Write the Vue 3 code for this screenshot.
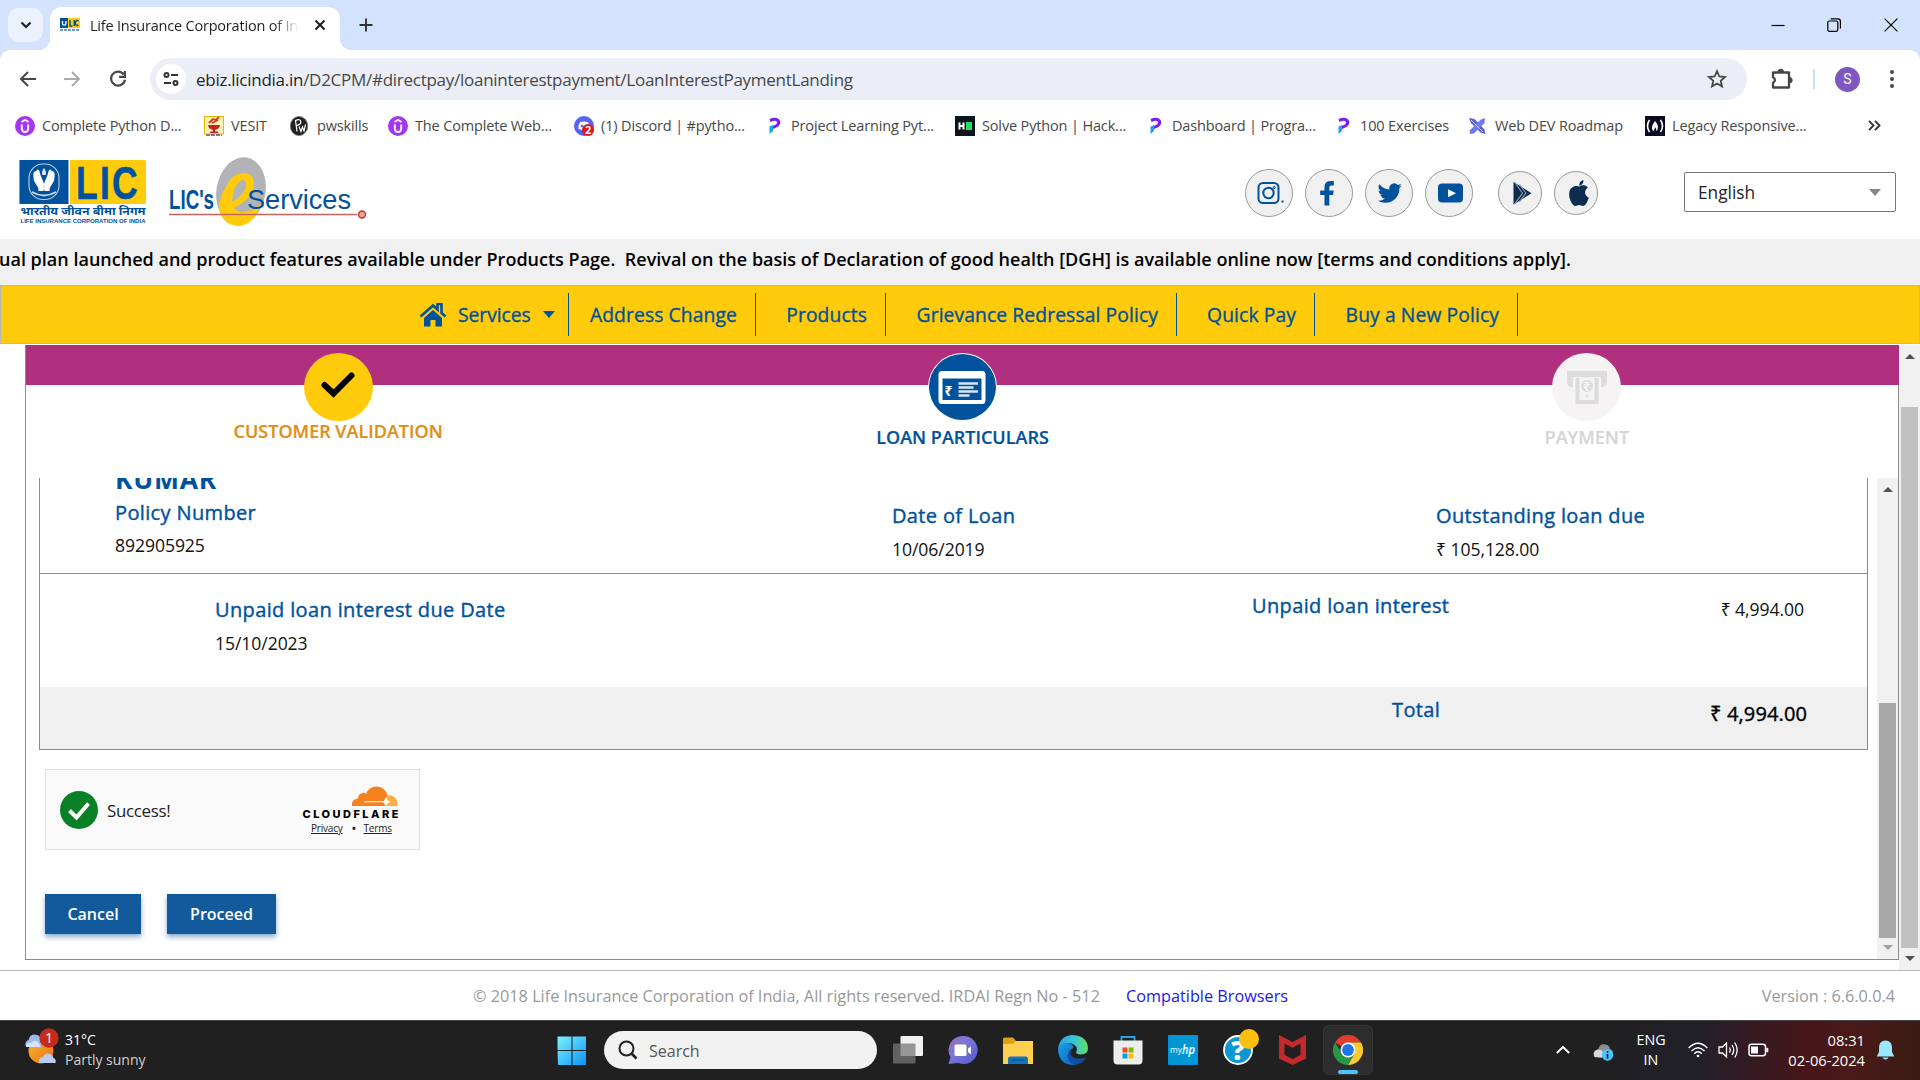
<script setup>
const bookmarks = [
  { icon: 'udemy', label: 'Complete Python D...', w: 189 },
  { icon: 'vesit', label: 'VESIT', w: 86 },
  { icon: 'pw', label: 'pwskills', w: 98 },
  { icon: 'udemy', label: 'The Complete Web...', w: 186 },
  { icon: 'discord', label: '(1) Discord | #pytho...', w: 190 },
  { icon: 'prog', label: 'Project Learning Pyt...', w: 191 },
  { icon: 'hack', label: 'Solve Python | Hack...', w: 190 },
  { icon: 'prog', label: 'Dashboard | Progra...', w: 188 },
  { icon: 'prog', label: '100 Exercises', w: 135 },
  { icon: 'web', label: 'Web DEV Roadmap', w: 177 },
  { icon: 'fcc', label: 'Legacy Responsive...', w: 180 },
]
const navItems = [
  { label: 'Address Change', w: 187 },
  { label: 'Products', w: 130 },
  { label: 'Grievance Redressal Policy', w: 291 },
  { label: 'Quick Pay', w: 138 },
  { label: 'Buy a New Policy', w: 203 },
]
</script>

<template>
  <div class="screen">
    <header class="tabs">
      <div class="tab-menu">
        <svg width="12" height="8" viewBox="0 0 12 8"><path d="M1.5 1.5 6 6l4.500-4.500" fill="none" stroke="#1f1f1f" stroke-width="2.200" /></svg>
      </div>
      <div class="tab">
        <svg class="fav" width="20" height="14" viewBox="0 0 20 14">
          <rect width="8" height="10" fill="#00529c" /><rect x="8" width="12" height="10" fill="#ffcb0b" />
          <path d="M2.500 3v2.500a1.700 1.700 0 0 0 3.400 0V3" fill="none" stroke="#fff" stroke-width="1.300" />
          <path d="M10 2v6h2.500M14.300 2v6M18.500 3a2 2.500 0 1 0 0 4" fill="none" stroke="#00529c" stroke-width="1.500" />
          <path d="M0 12h20" stroke="#6d9bc9" stroke-width="2" stroke-dasharray="3 1" />
        </svg>
        <span class="tab-title">Life Insurance Corporation of India</span>
        <svg class="tab-x" width="12" height="12" viewBox="0 0 12 12"><path d="m1.500 1.500 9 9m0-9-9 9" stroke="#1f1f1f" stroke-width="2" /></svg>
      </div>
      <svg class="plus" width="14" height="14" viewBox="0 0 14 14"><path d="M7 .5v13M.5 7h13" stroke="#333" stroke-width="1.900" /></svg>
      <div class="win">
        <svg width="14" height="14" viewBox="0 0 14 14"><path d="M.5 7.500h13" stroke="#000" stroke-width="1.200" /></svg>
        <svg class="restore" width="14" height="14" viewBox="0 0 14 14"><rect x=".8" y="3" width="10" height="10.300" rx="1.500" fill="none" stroke="#000" stroke-width="1.200" /><path d="M3.500.8h7.300q2.600 0 2.600 2.600v7" fill="none" stroke="#000" stroke-width="1.200" /></svg>
        <svg width="14" height="14" viewBox="0 0 14 14"><path d="m.6.600 12.800 12.800m0-12.800L.6 13.400" stroke="#000" stroke-width="1.200" /></svg>
      </div>
    </header>

    <div class="chrome">
      <div class="toolbar">
        <svg width="18" height="16" viewBox="0 0 18 16"><path d="M17 8H2m7-7L2 8l7 7" fill="none" stroke="#474747" stroke-width="2" /></svg>
        <svg class="fwd" width="18" height="16" viewBox="0 0 18 16"><path d="M1 8h15M9 1l7 7-7 7" fill="none" stroke="#aaa" stroke-width="2" /></svg>
        <svg class="reload" width="18" height="18" viewBox="0 0 18 18"><path d="M14.800 4.500A7 7 0 1 0 16 9.800M15.900 1v5.800h-5.800" fill="none" stroke="#474747" stroke-width="2.200" /></svg>
        <div class="omni">
          <div class="site">
            <svg width="16" height="16" viewBox="0 0 16 16" fill="none" stroke="#333" stroke-width="2"><circle cx="3.500" cy="4" r="2" /><path d="M8 4h7M1 12h7" /><circle cx="12.500" cy="12" r="2" /></svg>
          </div>
          <span class="url"><b>ebiz.licindia.in</b>/D2CPM/#directpay/loaninterestpayment/LoanInterestPaymentLanding</span>
          <svg class="star" width="20" height="20" viewBox="0 0 20 20"><path d="m10 2.200 2.300 5.300 5.700.5-4.300 3.800 1.300 5.700-5-3-5 3 1.300-5.700L2 8l5.700-.5z" fill="none" stroke="#474747" stroke-width="1.800" /></svg>
        </div>
        <svg class="puzzle" width="22" height="22" viewBox="0 0 22 22"><path d="M2 4.500h16v15H2v-4.600a3 3 0 0 0 0-5.600z" fill="none" stroke="#474747" stroke-width="2.300" stroke-linejoin="round" /><path d="M7 4a2.800 2.800 0 0 1 5.600 0M18.500 9.500a2.700 2.700 0 0 1 0 5.400" fill="#474747" stroke="#474747" /></svg>
        <i class="tsep"></i>
        <div class="avatar">S</div>
        <svg class="kebab" width="4" height="18" viewBox="0 0 4 18" fill="#474747"><circle cx="2" cy="2" r="2" /><circle cx="2" cy="9" r="2" /><circle cx="2" cy="16" r="2" /></svg>
      </div>

      <div class="bookmarks">
        <div v-for="b in bookmarks" :key="b.label" class="bm" :style="{ width: b.w + 'px' }">
          <svg width="20" height="20" viewBox="0 0 20 20">
            <g v-if="b.icon === 'udemy'"><circle cx="10" cy="10" r="10" fill="#a435f0" /><path d="M6.800 8.500v4.300a3.200 3.200 0 0 0 6.400 0V8.500M6.500 6 10 3.800 13.500 6" fill="none" stroke="#fff" stroke-width="1.900" /></g>
            <g v-else-if="b.icon === 'vesit'"><rect x=".5" y=".5" width="19" height="17.500" fill="#fff3b8" stroke="#f2b400" /><path d="M4 9h12q-.5 4-5 5v1.500h3V17H6v-1.500h3V14q-4.500-1-5-5z" fill="#c81f1f" /><path d="m5 7 4-4 3 1 3-3M8 7l6-3" stroke="#d63a1a" stroke-width="1.800" fill="none" /><path d="M2 19h16" stroke="#5a4aa0" stroke-width="1.500" stroke-dasharray="4 1" /></g>
            <g v-else-if="b.icon === 'pw'"><ellipse cx="9" cy="10" rx="8.700" ry="9.600" fill="#222" stroke="#777" stroke-width=".8" /><path d="m7 15.500-1.500-11q5-2 5.300 1t-4 4M9 10.500l2 5 1.500-4.500 1.500 4 1.500-6.500" fill="none" stroke="#fff" stroke-width="1.200" /></g>
            <g v-else-if="b.icon === 'discord'"><circle cx="10" cy="10" r="10" fill="#5865f2" /><path d="M4.500 13q-.5-5 2-7 3.500-1.200 7 0 2.500 2 2 7-5 2-11 0z" fill="#fff" /><circle cx="8" cy="10" r="1.300" fill="#5865f2" /><circle cx="14" cy="14" r="6" fill="#e0141c" /><text x="14" y="18" text-anchor="middle" font-size="11" font-weight="700" fill="#fff" font-family="Open Sans, sans-serif">2</text></g>
            <g v-else-if="b.icon === 'prog'"><path d="M6 4.500q6-2.500 8 0t-1 5l-5 2.500" fill="none" stroke="#7b1df2" stroke-width="3" /><path d="M5.500 10.500 9 9v6l-3.500 3z" fill="#17a5f5" /></g>
            <g v-else-if="b.icon === 'hack'"><rect width="20" height="20" fill="#0e141e" /><path d="M4.500 6.500v7M8.500 6.500v7M4.500 10h4" stroke="#fff" stroke-width="2" /><rect x="11" y="6" width="6" height="8" fill="#1ee35f" /></g>
            <g v-else-if="b.icon === 'web'"><path d="m1 2 5.500 1L16.500 13.500 17.500 18 12.500 16.500 3 7z" fill="#5a60dc" /><path d="m17 2-4 1.500L1.500 14.500 2 18l4-.5L16.500 7z" fill="#6f7bea" /><path d="m3 4 12 12" stroke="#fff" stroke-width=".7" /></g>
            <g v-else><rect width="20" height="20" fill="#0a0a23" /><path d="M4.500 4q-4 6 0 12M15.500 4q4 6 0 12" fill="none" stroke="#fff" stroke-width="1.600" /><path d="M10 5q3 3 3 6t-2 4q1-2-.8-3.700Q9.500 13 9 15q-2.500-1-2-4t3-6z" fill="#fff" /></g>
          </svg>
          <span>{{ b.label }}</span>
        </div>
        <svg class="more" width="13" height="11" viewBox="0 0 13 11"><path d="m1 .8 4.500 4.700L1 10.200M7 .8l4.500 4.700L7 10.200" fill="none" stroke="#333" stroke-width="1.900" /></svg>
      </div>
    </div>

    <div class="brand">
      <svg class="lic" width="128" height="70" viewBox="0 0 128 70">
        <rect x=".5" y="4" width="126.500" height="44" rx="1.500" fill="#ffcb0b" /><path d="M.5 4H50v44H.5z" fill="#00529c" /><path d="M50.200 4v44" stroke="#fff" stroke-width="1.400" />
        <rect x="10" y="8" width="30" height="35.500" rx="14" fill="none" stroke="#b5cce4" stroke-width="1.200" />
        <path d="M14.500 17q1-2.500 2.500-1.500l1-2 2 .5 1.500 5 2.500 6q2 4 .5 10h-5q.5-3-2-6-4-5-3-12zM35.500 17q-1-2.500-2.500-1.500l-1-2-2 .5-1.500 5-2.500 6q-2 4-.5 10h5q-.5-3 2-6 4-5 3-12z" fill="#fff" /><path d="M25 12q3 4 1.500 7h-3Q22 16 25 12z" fill="#dfeaf5" /><path d="M13 36q12 7 24 0" fill="none" stroke="#c3d6ea" stroke-width="2" />
        <text x="57" y="42.500" font-size="46" font-weight="700" fill="#00529c" stroke="#00529c" stroke-width=".6" textLength="64" lengthAdjust="spacingAndGlyphs" letter-spacing="3" font-family="Liberation Sans, sans-serif">LIC</text>
        <text x="1.500" y="59" font-size="11" font-weight="700" fill="#00529c" textLength="125" lengthAdjust="spacingAndGlyphs" font-family="Noto Sans Devanagari, Noto Sans, sans-serif">भारतीय जीवन बीमा निगम</text>
        <text x="1.500" y="67" font-size="6" font-weight="700" fill="#00529c" textLength="125" lengthAdjust="spacingAndGlyphs" font-family="Liberation Sans, sans-serif">LIFE INSURANCE CORPORATION OF INDIA</text>
      </svg>
      <svg class="eserv" width="200" height="72" viewBox="0 0 200 72">
        <ellipse cx="72" cy="35" rx="24.500" ry="34" transform="rotate(10 72 35)" fill="#b1b3b6" />
        <path d="M50 54Q50 40 58 29 63 18 73 17q12-1 12 12-1 13-20 23 5 6 13 3.500Q85 54 92 48q-3 10-9 16-7 6-14 6-15-1-19-16zM63 46q10-5 13.500-14 1.500-8-2.500-8-4 0-8 8-3 7-3 14z" fill="#ffcb0b" fill-rule="evenodd" />
        <text x="0" y="53" font-size="27" font-weight="700" fill="#00529c" textLength="45" lengthAdjust="spacingAndGlyphs" font-family="Liberation Sans, sans-serif">LIC's</text>
        <text x="78" y="53" font-size="27" fill="#00529c" textLength="104" lengthAdjust="spacingAndGlyphs" font-family="Liberation Sans, sans-serif">Services</text>
        <path d="M0 58.500h188" stroke="#c96560" stroke-width="1.500" /><circle cx="193" cy="58.500" r="3.500" fill="#f0a090" stroke="#b83a34" stroke-width="1.400" />
      </svg>
      <div class="social">
        <span class="c"><svg width="48" height="48" viewBox="0 0 48 48" fill="none" stroke="#00529c" stroke-width="2"><rect x="13.500" y="14" width="20" height="20" rx="4.500" /><circle cx="23.500" cy="24" r="5.200" /><circle cx="29.200" cy="18.500" r=".5" /><path d="M36.500 32.500h2" stroke-width="2" /></svg></span>
        <span class="c"><svg width="48" height="48" viewBox="0 0 48 48"><path d="M19.500 36.500V26h-4.300v-4.500h4.300V18q0-6 6-6h3.300v4.500h-2.500q-2 0-2 2v3h4.500L28 26h-3.700v10.500z" fill="#00529c" /></svg></span>
        <span class="c"><svg width="48" height="48" viewBox="0 0 24 24"><path d="M18.300 8.300c-.4.200-.9.300-1.400.4.500-.3.900-.8 1.100-1.300-.5.300-1 .5-1.600.6a2.450 2.450 0 0 0-4.200 2.200c-2-.1-3.900-1.100-5.100-2.600-.7 1.200-.3 2.600.8 3.300-.4 0-.8-.1-1.100-.3 0 1.200.8 2.200 2 2.400-.4.100-.7.100-1.100 0 .3 1 1.200 1.700 2.300 1.700A5 5 0 0 1 6.400 15.800c1.100.7 2.400 1.100 3.800 1.100 4.600 0 7.200-3.900 7-7.400.5-.3.800-.7 1.100-1.200z" fill="#00529c" /></svg></span>
        <span class="c"><svg width="48" height="48" viewBox="0 0 48 48"><rect x="13" y="14.500" width="25" height="19" rx="4" fill="#00529c" /><path d="m23 20.300 8 4-8 4z" fill="#fff" /></svg></span>
        <span class="c sm"><svg width="44" height="44" viewBox="0 0 44 44"><path d="M15.500 11v22.500l18-11.300z" fill="#0c2c50" /><path d="m16.500 11 8 11.200-8 11M21.500 13.500l6.500 8.700-6.500 8.500" fill="none" stroke="#8195ac" stroke-width="1.200" /></svg></span>
        <span class="c sm last"><svg width="44" height="44" viewBox="0 0 44 44"><path d="M25.500 15.500c1.800-1.600 6-2 8.400 1-4.200 3-3.500 8 .900 10.200-1.400 4-3.400 8.300-5.800 8.300-1.600 0-2.200-.9-3.800-.9-1.700 0-2.200.9-3.800.9-3 0-6.700-7-6.200-12.700.5-7 6.500-8.300 10.300-6.800z" fill="#0c2c50" /><path d="M25.200 14.800q-.2-4.500 4.300-5.800.2 4.600-4.300 5.800z" fill="#0c2c50" /></svg></span>
      </div>
      <div class="lang"><span>English</span><i></i></div>
    </div>

    <div class="ticker"><p>New individual plan launched and product features available under Products Page.&nbsp; Revival on the basis of Declaration of good health [DGH] is available online now [terms and conditions apply].</p></div>

    <nav class="nav">
      <div class="nav-item home">
        <svg width="28" height="24" viewBox="0 0 28 24" fill="#00529c"><path d="m14 7 9 8v8.500h-6.500V17h-5v6.500H5V15z" /><path d="m1.500 13.500 12.500-11 4.500 4V1h4v9l4 3.500" fill="none" stroke="#00529c" stroke-width="2.600" /></svg>
        <span>Services</span><i class="caret"></i>
      </div>
      <div v-for="n in navItems" :key="n.label" class="nav-item" :style="{ width: n.w + 'px' }"><span>{{ n.label }}</span></div>
    </nav>

    <main class="main">
      <section class="panel">
        <div class="steps">
          <div class="step done">
            <div class="dot"><svg width="36" height="30" viewBox="0 0 36 30"><path d="m4.500 15 9 8.500L31.500 5.500" fill="none" stroke="#000" stroke-width="6" stroke-linejoin="miter" stroke-linecap="round" /></svg></div>
            <span>CUSTOMER VALIDATION</span>
          </div>
          <div class="step now">
            <div class="dot"><svg width="48" height="34" viewBox="0 0 48 34"><rect x="2.500" y="3" width="43" height="29" rx="1.500" fill="none" stroke="#fff" stroke-width="4" /><path d="M2 6h44" stroke="#fff" stroke-width="5" /><path d="M20.500 13.500h19.500M20.500 17.500h15M20.500 21.500h19.500M20.500 25.500h11" stroke="#d8e6f3" stroke-width="2.400" /><text x="6.500" y="26" font-size="14" font-weight="700" fill="#fff" font-family="Noto Sans, sans-serif">₹</text></svg></div>
            <span>LOAN PARTICULARS</span>
          </div>
          <div class="step next">
            <div class="dot"><svg width="40" height="34" viewBox="0 0 40 34"><path d="M0 1h40v11q0 5-6 5V7H6v10q-6 0-6-5z" fill="#dcdcdc" /><path d="M10.500 8v24h19V8" fill="none" stroke="#dcdcdc" stroke-width="4" /><path d="M10 32h20" stroke="#dcdcdc" stroke-width="2" /><circle cx="20" cy="16" r="6" fill="#dcdcdc" /><text x="16.200" y="21" font-size="13" font-weight="700" fill="#f5f3f3" font-family="Noto Sans, sans-serif">₹</text><circle cx="20" cy="26" r="1.500" fill="#dcdcdc" /></svg></div>
            <span>PAYMENT</span>
          </div>
        </div>

        <div class="scroller">
          <div class="details">
            <div class="box">
              <div class="row1">
                <div class="c1"><h2>KUMAR</h2><label>Policy Number</label><p>892905925</p></div>
                <div class="c2"><label>Date of Loan</label><p>10/06/2019</p></div>
                <div class="c2"><label>Outstanding loan due</label><p>₹ 105,128.00</p></div>
              </div>
              <div class="row2">
                <div class="due"><label>Unpaid loan interest due Date</label><p>15/10/2023</p></div>
                <label class="interest">Unpaid loan interest</label>
                <p class="amount">₹ 4,994.00</p>
              </div>
              <div class="total"><label>Total</label><p>₹ 4,994.00</p></div>
            </div>

            <div class="captcha">
              <svg width="38" height="38" viewBox="0 0 38 38"><circle cx="19" cy="19" r="19" fill="#088126" /><path d="m9.500 19.500 7 7L28.500 12.500" fill="none" stroke="#fff" stroke-width="4" /></svg>
              <span class="ok">Success!</span>
              <div class="cf">
                <svg width="96" height="34" viewBox="0 0 96 34">
                  <path d="M50 21q-1-7 6-7.500 0-4 3-5 3-1.500 5 .5 3-7.500 10-7.500 9 0 11.500 9L83 21z" fill="#f6821f" /><path d="M82 21q0-6 5-11 8 1 8.500 8.500l-.5 2.500z" fill="#fbad41" /><path d="M62 16.300h20q-.5 0 2-4.300 1.500 4 4.500 4.700-3 1-4.500 3.800-1.500-3-4-3.200H62z" fill="#fff" />
                  <text x=".5" y="33.300" font-size="11" font-weight="800" fill="#000" textLength="96" font-family="Inter, sans-serif">CLOUDFLARE</text>
                </svg>
                <div class="links"><a>Privacy</a><b>•</b><a>Terms</a></div>
              </div>
            </div>

            <div class="actions"><button class="cancel">Cancel</button><button class="proceed">Proceed</button></div>
          </div>
          <div class="sb inner"><i class="up"></i><i class="thumb"></i><i class="down"></i></div>
        </div>
      </section>
      <div class="sb outer"><i class="up"></i><i class="thumb"></i><i class="down"></i></div>
    </main>

    <footer class="foot">
      <span class="copy">© 2018 Life Insurance Corporation of India, All rights reserved. IRDAI Regn No - 512</span>
      <a>Compatible Browsers</a>
      <span class="ver">Version : 6.6.0.0.4</span>
    </footer>

    <div class="taskbar">
      <div class="weather">
        <svg width="36" height="44" viewBox="0 0 36 44">
          <defs><linearGradient id="sun" x2="1" y2="1"><stop stop-color="#f8bb32" /><stop offset="1" stop-color="#e96d12" /></linearGradient></defs>
          <circle cx="16" cy="26" r="12.500" fill="url(#sun)" /><path d="M1 22q-2-5 2.500-7 2-7 8.500-5 4 1 4 5v7z" fill="#9db9ea" /><path d="M1 22q0-5 5-4 3-4 7-1l3 5z" fill="#d6e3fa" />
          <path d="M14 38q-1-6 4-6 2-5 7-3 3 1 3.500 4 3 1 2 5z" fill="#b9cdf4" /><circle cx="24" cy="13" r="9.700" fill="#c42b1c" /><text x="24" y="18" text-anchor="middle" font-size="14" fill="#fff" font-family="Open Sans, sans-serif">1</text>
        </svg>
        <p>31°C<br /><em>Partly sunny</em></p>
      </div>
      <svg class="start" width="30" height="30" viewBox="0 0 30 30">
        <defs><linearGradient id="win" x2="1" y2="1"><stop stop-color="#7cf2ff" /><stop offset="1" stop-color="#0a95fa" /></linearGradient></defs>
        <path d="M1 .5h13.500V14H.5V1zM15.500.5H29V14H15.500zM.5 15h14v14H1zM15.500 15H29v14H15.500z" fill="url(#win)" />
      </svg>
      <div class="search"><svg width="20" height="20" viewBox="0 0 20 20"><circle cx="8.500" cy="8.500" r="7" fill="none" stroke="#222" stroke-width="2" /><path d="m13.500 13.500 5 5" stroke="#222" stroke-width="2.600" /></svg><span>Search</span></div>
      <div class="apps">
        <svg width="30" height="30" viewBox="0 0 30 30"><rect x="7.500" y="1" width="22.500" height="20" rx="1" fill="#f1f1f1" /><rect x="0" y="8.500" width="22.500" height="20" rx="1" fill="#777" fill-opacity=".75" /></svg>
        <svg width="30" height="30" viewBox="0 0 30 30"><defs><linearGradient id="chat" x2="1" y2="1"><stop stop-color="#a06ab2" /><stop offset=".4" stop-color="#7b78d8" /><stop offset="1" stop-color="#5157cc" /></linearGradient></defs><path d="M15 1a14 14 0 1 1-4.500 27L.5 29l2-7A14 14 0 0 1 15 1z" fill="url(#chat)" /><rect x="6.500" y="9.500" width="12" height="11.500" rx="1.500" fill="#fff" /><path d="m20 13.500 3-2.500v8.500L20 17z" fill="#fff" /></svg>
        <svg width="30" height="30" viewBox="0 0 30 30"><path d="M0 4q0-1.500 1.500-1.500H10L13 6v6H0z" fill="#dfa013" /><path d="M0 9h10l3-3h17v23H0z" fill="#ffd050" /><path d="M5 29v-5q0-2.500 2.500-2.500h15q2.500 0 2.500 2.500v5z" fill="#1174bd" /><path d="M8.500 25h13" stroke="#0a4f8a" stroke-width="1.200" /></svg>
        <svg width="30" height="30" viewBox="0 0 30 30"><defs><linearGradient id="eg" x2="1"><stop stop-color="#20a0e0" /><stop offset=".5" stop-color="#37c3dc" /><stop offset="1" stop-color="#66e060" /></linearGradient><linearGradient id="eb" x2="1" y2="1"><stop stop-color="#1fa1e8" /><stop offset="1" stop-color="#0a62c0" /></linearGradient></defs><path d="M0 14Q2 0 15 0q14 1 15 13 0 6.500-7 6.500-6 0-4.500-3 2-5-4.500-8Q5 6 0 14z" fill="url(#eg)" /><path d="M0 14q2-6 8.500-6 6 0 7 5-6 2-4 9 1.500 5 6 7.800Q1 31 0 14z" fill="url(#eb)" /><path d="M12.500 14.500q-2 12 15.500 8-4 7-11.500 7.500-9-4-6.500-11 .5-3 2.500-4.500z" fill="#124e9c" /></svg>
        <svg width="30" height="30" viewBox="0 0 30 30"><path d="M8.500 7V2h13v5" fill="none" stroke="#2aa3e8" stroke-width="1.900" /><path d="M.5 5.500h29v20q0 4-4 4h-21q-4 0-4-4z" fill="#ededed" /><path d="M9.500 12.500h5v5h-5z" fill="#f04e23" /><path d="M15.500 12.500h5v5h-5z" fill="#7fba00" /><path d="M9.500 18.500h5v5h-5z" fill="#00a4ef" /><path d="M15.500 18.500h5v5h-5z" fill="#ffb900" /></svg>
        <svg width="30" height="30" viewBox="0 0 30 30"><rect width="30" height="30" rx="1" fill="#0096d6" /><text x="2" y="18" font-size="8.500" fill="#fff" textLength="12" lengthAdjust="spacingAndGlyphs" font-family="Open Sans, sans-serif">my</text><text x="14" y="19" font-size="13" font-weight="600" font-style="italic" fill="#fff" textLength="13" lengthAdjust="spacingAndGlyphs" font-family="Open Sans, sans-serif">hp</text></svg>
        <svg class="help" width="36" height="36" viewBox="0 0 36 36"><circle cx="15" cy="21" r="14" fill="#0e97d2" stroke="#fff" stroke-width="1.800" /><text x="15" y="31" text-anchor="middle" font-size="27" font-weight="800" fill="#fff" font-family="Open Sans, sans-serif">?</text><circle cx="26" cy="10" r="10" fill="#ffbf0f" /></svg>
        <svg class="mc" width="27" height="30" viewBox="0 0 27 30"><path d="M0 0 13.500 7 27 0v23.500L13.500 30 0 23.500zM5.500 8.500V20l8 4 8-4V8.500l-8 4.200z" fill="#c42a2c" fill-rule="evenodd" /></svg>
        <div class="active"><svg width="30" height="30" viewBox="0 0 30 30"><path d="M15 15 2 7.500A15 15 0 0 1 28 7.500H15z" fill="#e33b2e" /><path d="M28 7.500A15 15 0 0 1 15 30l6.500-11.500L15 7.500z" fill="#fcc934" /><path d="M2 7.500A15 15 0 0 0 15 30l6.500-11.500H9z" fill="#279847" /><circle cx="15" cy="15" r="7.500" fill="#fff" /><circle cx="15" cy="15" r="5.900" fill="#1f74e8" /></svg></div>
      </div>
      <div class="tray">
        <svg width="14" height="8" viewBox="0 0 14 8"><path d="m.8 7 6.200-6L13.200 7" fill="none" stroke="#fff" stroke-width="1.900" /></svg>
        <svg class="od" width="21" height="18" viewBox="0 0 21 18"><path d="M1.500 14Q-1 8 5 6.500 7 0 12.500 1.500q4 .5 4.500 4.500 3 1 3 4l-8 5z" fill="#8d8d8d" /><path d="M1.500 14Q-1 8 5 6.500q4 0 6 4l-2 4z" fill="#d9d9d9" /><circle cx="14.500" cy="12" r="5.700" fill="#4cc2ff" /><path d="M14.500 11v4.500M14.500 8v1.700" stroke="#123" stroke-width="1.700" /></svg>
        <p class="lg">ENG<br />IN</p>
        <svg class="wifi" width="20" height="16" viewBox="0 0 20 16" fill="none" stroke="#fff" stroke-width="1.400"><path d="M.7 6q9.300-9.500 18.600 0M3.500 9q6.500-6.500 13 0M6.200 11.700q3.800-3.800 7.600 0" /><circle cx="10" cy="14" r="1.300" fill="#fff" stroke="none" /></svg>
        <svg class="vol" width="21" height="18" viewBox="0 0 21 18" fill="none" stroke="#fff" stroke-width="1.300"><path d="M1 6h3.500l4-4v14l-4-4H1zM11.500 6.500q1.500 2.500 0 5M14 4q3.500 5 0 10M16.700 1.500q5 7.500 0 15" /></svg>
        <svg class="bat" width="21" height="14" viewBox="0 0 21 14"><rect x="1" y="1.200" width="16.500" height="11.600" rx="2.500" fill="none" stroke="#fff" stroke-width="1.500" /><rect x="3" y="3.500" width="7" height="7" fill="#fff" /><path d="M19.300 4.800v4.400" stroke="#fff" stroke-width="2" /></svg>
        <p class="clock">08:31<br />02-06-2024</p>
        <svg class="bell" width="17" height="20" viewBox="0 0 17 20"><path d="M8.500.5q6 0 6.500 6.500v5l2 4v.500H0V16l2-4V7Q2.500.5 8.500.5zM5.500 17.500h6q-1 2-3 2t-3-2z" fill="#98e8ff" /></svg>
      </div>
    </div>
  </div>
</template>

<style>
html, body { margin: 0; background: #fff; overflow: hidden; }
</style>

<style scoped>
* { box-sizing: border-box; }
.screen { width: 1920px; height: 1080px; overflow: hidden; background: #fff; font-family: "Open Sans", "Noto Sans", sans-serif; display: flex; flex-direction: column; }
.screen > * { flex: none; }
svg { display: block; flex: none; }
p, h2 { margin: 0; }
span, label, a, p { white-space: nowrap; }

.tabs { height: 50px; background: #d3e3fd; display: flex; align-items: center; padding-left: 8px; position: relative; }
.tab-menu { width: 35px; height: 34px; border-radius: 11px; background: #ebf2fe; display: flex; align-items: center; justify-content: center; }
.tab { margin-left: 7px; width: 290px; height: 43px; align-self: flex-end; background: #fff; border-radius: 12px 12px 0 0; display: flex; align-items: center; padding: 0 13px 7px 10px; position: relative; }
.tab::before, .tab::after { content: ""; position: absolute; bottom: 0; width: 12px; height: 12px; }
.tab::before { left: -12px; background: radial-gradient(circle at 0 0, transparent 12px, #fff 12.5px); }
.tab::after { right: -12px; background: radial-gradient(circle at 100% 0, transparent 12px, #fff 12.5px); }
.tab-title { margin-left: 10px; width: 209px; overflow: hidden; font-size: 14.5px; letter-spacing: -0.2px; color: #1f1f1f; -webkit-mask-image: linear-gradient(90deg, #000 88%, transparent); mask-image: linear-gradient(90deg, #000 88%, transparent); }
.tab-x { margin-left: 15px; }
.plus { margin-left: 19px; }
.win { margin-left: auto; margin-right: 22px; display: flex; gap: 42.5px; }
.restore { margin: 0 1px 0 -1px; }

.chrome { background: #fff; border-radius: 10px 10px 0 0; box-shadow: 0 -12px 0 0 #d3e3fd; height: 96px; }
.tabs { z-index: 1; }
.toolbar { height: 58px; display: flex; align-items: center; padding: 0 26px 0 19px; }
.fwd { margin-left: 26px; }
.reload { margin-left: 28px; }
.omni { margin-left: 23px; width: 1599px; height: 42px; border-radius: 21px; background: #ebeef7; display: flex; align-items: center; padding: 0 20px 0 6px; }
.site { width: 30px; height: 30px; border-radius: 50%; background: #fff; display: flex; align-items: center; justify-content: center; }
.url { margin-left: 10px; font-size: 17px; letter-spacing: -0.27px; color: #474747; }
.url b { font-weight: 400; color: #1f1f1f; }
.star { margin-left: auto; }
.puzzle { margin-left: 24px; }
.tsep { width: 2px; height: 20px; background: #c9dcfb; margin-left: 20px; }
.avatar { margin-left: 20px; width: 25px; height: 25px; border-radius: 50%; background: #7e57c2; color: #fff; font: 14px/25px Roboto, sans-serif; text-align: center; }
.kebab { margin-left: 30px; }
.bookmarks { display: flex; align-items: center; height: 35px; padding-left: 15px; }
.bm { display: flex; align-items: center; gap: 7px; font-size: 14.5px; letter-spacing: -0.15px; color: #474747; flex: none; }
.bm span { margin-top: -1px; }
.more { margin-left: 43px; }

.brand { height: 93px; display: flex; align-items: flex-start; padding-top: 10px; }
.lic { margin-left: 19px; overflow: visible; }
.eserv { margin-left: 22px; overflow: visible; }
.social { margin: 13px 0 0 876px; display: flex; align-items: center; }
.c { width: 48px; height: 48px; border-radius: 50%; border: 1px solid #999; background: #f0f0f0; margin-right: 12px; display: flex; align-items: center; justify-content: center; flex: none; }
.c.sm { width: 44px; height: 44px; margin: 0 12px 0 13px; }
.c.last { margin: 0; }
.lang { margin: 16px 0 0 86px; width: 212px; height: 40px; border: 1px solid #777; border-radius: 2px; display: flex; align-items: center; justify-content: space-between; padding: 0 14px 0 13px; font-size: 17.3px; color: #222; flex: none; }
.lang span { padding-top: 1px; }
.lang i { border: 6px solid transparent; border-top: 7px solid #858585; border-bottom: 0; }

.ticker { height: 46px; background: #f0f0f0; display: flex; justify-content: flex-end; padding-right: 349px; overflow: hidden; }
.ticker p { font-size: 18px; font-weight: 600; line-height: 40px; color: #000; letter-spacing: 0.01px; }

.nav { height: 59px; margin-bottom: 1px; background: #ffcb0b; border: 1px solid #b8b8b8; display: flex; align-items: center; padding-left: 418px; }
.nav-item { height: 43px; border-right: 1px solid #00529c; display: flex; align-items: center; justify-content: flex-end; padding-right: 18px; font-size: 19.3px; letter-spacing: 0.1px; -webkit-text-stroke: 0.35px #00529c; color: #00529c; flex: none; }
.nav-item.home { width: 150px; justify-content: flex-start; padding: 0; letter-spacing: -0.05px; }
.home span { margin-left: 11px; width: 74px; }
.caret { margin-left: 11px; border: 6px solid transparent; border-top: 7px solid #00529c; border-bottom: 0; }

.main { height: 625px; display: flex; padding-left: 25px; }
.panel { width: 1874px; height: 615px; border: 1px solid #8d8d8d; border-top: 0; display: flex; flex-direction: column; position: relative; }
.panel::before { content: ""; position: absolute; top: 0; left: 0; right: -1px; height: 40px; background: #b02f7f; }
.steps { height: 133px; display: grid; grid-template-columns: repeat(3, 1fr); position: relative; margin-right: -1px; }
.step { display: flex; flex-direction: column; align-items: center; padding-top: 8px; font-size: 18px; font-weight: 600; }
.dot { width: 69px; height: 68px; border-radius: 50%; display: flex; align-items: center; justify-content: center; }
.step span { line-height: 22px; margin-top: 5px; -webkit-text-stroke: 0.2px currentColor; }
.done { color: #e08e14; }
.done .dot { background: #ffcb0b; padding-bottom: 5px; }
.step.done span { margin-top: -1px; }
.now { color: #00529c; }
.now .dot { background: #00529c; border: 1px solid #fff; }
.next { color: #d6d6d6; }
.next .dot { background: #f5f3f3; }

.scroller { height: 481px; display: flex; overflow: hidden; }
.details { width: 1851px; padding-left: 13px; }
.box { width: 1829px; height: 272px; border: 1px solid #8d8d8d; border-top: 0; }
label { font-size: 20px; letter-spacing: 0.36px; -webkit-text-stroke: 0.4px #00529c; color: #00529c; line-height: 26px; display: block; }
.box p { font-size: 17.600px; line-height: 26px; color: #111; letter-spacing: -0.08px; }
.row1 { height: 96px; border-bottom: 1px solid #8d8d8d; display: grid; grid-template-columns: 852px 544px 1fr; }
.c1 { padding-left: 75px; }
.c1 h2 { font-size: 26.5px; letter-spacing: 0.7px; font-weight: 700; line-height: 28px; color: #00529c; margin-top: -13px; }
.c1 label { margin-top: 7px; }
.c2 p, .due p { margin-top: 7px; }
.c1 p { margin-top: 6px; }
.c2 { padding-top: 25px; }
.row2 { height: 113px; display: flex; align-items: flex-start; }
.due { padding: 23px 0 0 175px; width: 1212px; }
.interest { margin-top: 19px; }
.amount { margin: 22px 63px 0 auto; }
.total { height: 62px; background: #f0f0f0; display: flex; align-items: flex-start; }
.total label { width: 319px; margin: 10px 0 0 1352px; }
.box .total p { font-size: 20px; letter-spacing: 0.15px; -webkit-text-stroke: 0.4px #000; margin: 14px 0 0 -1px; color: #000; }

.captcha { margin: 19px 0 0 6px; width: 375px; height: 81px; border: 1px solid #e0e0e0; background: #fafafa; display: flex; align-items: center; padding-left: 14px; }
.ok { margin-left: 9px; padding-top: 1px; font-size: 16.900px; letter-spacing: -0.3px; color: #222; width: 141px; }
.cf { margin-left: 54px; width: 96px; padding-top: 0; }
.links { display: flex; font-size: 10px; line-height: 12px; margin: 3px 0 0 9px; color: #222; letter-spacing: -0.2px; gap: 8px; }
.links a { text-decoration: underline; }
.links a:first-child { width: 33px; }
.actions { margin: 44px 0 0 6px; display: flex; gap: 26px; }
.actions button { border: 0; height: 40px; padding: 0; background: #135a9d; color: #fff; font: 600 16px/40px "Open Sans", sans-serif; box-shadow: 0 3px 5px rgba(19, 90, 157, .5); }
.cancel { width: 96px; }
.proceed { width: 109px; }

.sb { background: #f1f1f1; display: flex; flex-direction: column; align-items: center; flex: none; }
.sb i { flex: none; }
.up { border: 5px solid transparent; border-bottom: 5px solid #505050; border-top: 0; }
.down { border: 5px solid transparent; border-top: 5px solid #505050; border-bottom: 0; }
.inner { width: 21px; }
.inner .up { margin-top: 9px; }
.inner .thumb { width: 17px; height: 235px; margin-top: 211px; background: #a8a8a8; }
.inner .down { margin-top: 7px; border-top-color: #a0a0a0; }
.outer { width: 21px; height: 625px; }
.outer .up { margin-top: 9px; }
.outer .thumb { width: 17px; height: 541px; margin-top: 48px; background: #c1c1c1; }
.outer .down { margin-top: 8px; }

.foot { height: 50px; border-top: 1px solid #bbb; display: flex; align-items: center; padding: 0 25px 0 473px; font-size: 16.250px; color: #999; }
.copy { width: 653px; }
.foot a { color: #1a1ae6; }
.ver { margin-left: auto; }

.taskbar { height: 60px; background: linear-gradient(90deg, #202020 0, #202020 1590px, #22202a 1700px, #481518 1810px, #4a1a18 1850px, #3a1c14 1920px); border-top: 1px solid #444; display: flex; align-items: center; color: #fff; padding-bottom: 1px; }
.taskbar p { font-size: 14px; line-height: 20px; }
.weather { display: flex; margin-left: 25px; width: 532px; align-items: center; }
.weather svg { margin-top: -6px; }
.weather p { margin-left: 4px; }
.weather em { font-style: normal; color: #d0d0d0; }
.start { margin-top: 1px; }
.search { margin-left: 17px; width: 273px; height: 38px; border-radius: 19px; background: #f2f2f2; display: flex; align-items: center; padding-left: 14px; font-size: 16px; color: #555; }
.search span { margin-left: 11px; padding-top: 1px; }
.apps { display: flex; align-items: center; margin-left: 16px; gap: 25px; }
.help { margin: -6px -6px 0 0; }
.mc { margin-left: 1px; }
.active { margin-left: -8px; width: 50px; height: 50px; border-radius: 6px; background: #2d2d2d; border: 1px solid #363636; display: flex; align-items: center; justify-content: center; position: relative; }
.active::after { content: ""; position: absolute; bottom: 0; left: 14px; width: 20px; height: 4px; border-radius: 2px; background: #4cc2ff; }
.tray { margin-left: auto; margin-right: 26px; display: flex; align-items: center; }
.od { margin-left: 23px; margin-top: 3px; }
.taskbar .lg { margin-left: 22px; width: 30px; text-align: center; font-size: 14.300px; }
.wifi { margin-left: 22px; }
.vol { margin-left: 10px; }
.bat { margin-left: 9px; }
.taskbar .clock { margin-left: 11px; width: 85px; text-align: right; font-size: 14.700px; }
.bell { margin-left: 12px; }
</style>
